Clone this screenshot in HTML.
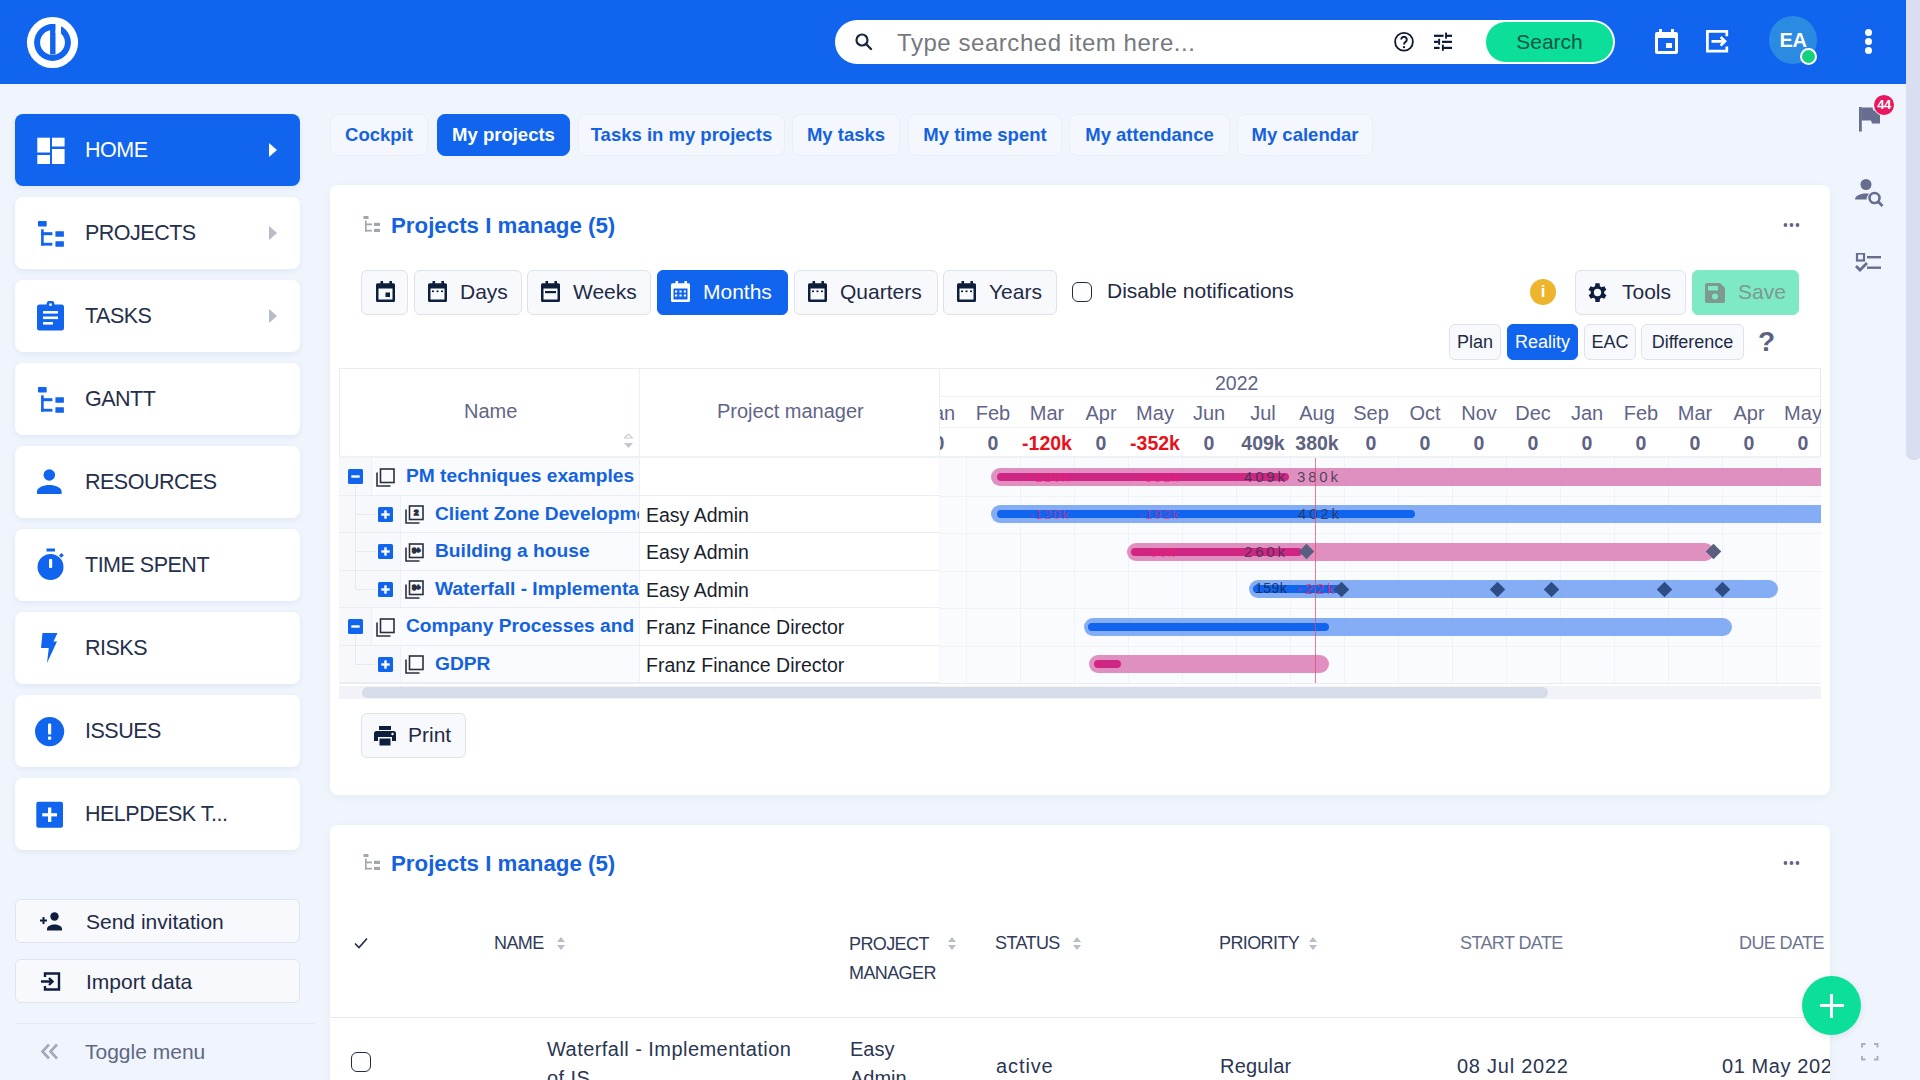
<!DOCTYPE html>
<html><head><meta charset="utf-8">
<style>
*{box-sizing:border-box;margin:0;padding:0}
html,body{width:1920px;height:1080px;overflow:hidden}
body{font-family:"Liberation Sans",sans-serif;background:#f0f5fd;position:relative;color:#1f2b45}
.abs{position:absolute}
#hdr{position:absolute;left:0;top:0;width:1906px;height:84px;background:#1064ee}
#vscroll{display:none}
#vthumb{position:absolute;left:1906px;top:0;width:16px;height:460px;border-radius:0 0 7px 7px;background:#d9def0}
.search{position:absolute;left:835px;top:20px;width:780px;height:44px;background:#fff;border-radius:22px}
.search .ph{position:absolute;left:62px;top:9px;font-size:24px;color:#76797f;letter-spacing:0.55px}
.sbtn{position:absolute;left:650px;top:1px;width:129px;height:42px;border-radius:21px;background:#0cdf99;color:#0d5443;font-size:21px;text-align:center;line-height:40px;border:1px solid #fff}
.nav{position:absolute;left:15px;width:285px;height:72px;background:#fff;border-radius:8px;box-shadow:0 2px 6px rgba(40,70,140,0.08)}
.nav .lbl{position:absolute;left:70px;top:23.5px;font-size:21.5px;letter-spacing:-0.5px;color:#25304b}
.nav .ico{position:absolute;left:22px;top:22px;width:28px;height:28px}
.nav .arr{position:absolute;left:254px;top:29px;width:0;height:0;border-top:7px solid transparent;border-bottom:7px solid transparent;border-left:8px solid #b7bbca}
.nav.act{background:#1064ee}
.nav.act .lbl{color:#fff}
.nav.act .arr{border-left-color:#fff}
.sbtnl{position:absolute;left:15px;width:285px;height:44px;border:1px solid #dfe4ee;border-radius:6px;background:#f7f9fd}
.sbtnl .lbl{position:absolute;left:70px;top:10px;font-size:21px;color:#1f2b45}
.tab{position:absolute;top:114px;height:42px;border-radius:8px;background:#f4f7fd;border:1px solid #eaeef6;color:#1462e0;font-weight:bold;font-size:18.5px;line-height:40px;text-align:center}
.tab.act{background:#1064ee;color:#fff;border-color:#1064ee}
.card{position:absolute;left:330px;width:1500px;background:#fff;border-radius:8px;box-shadow:0 2px 10px rgba(40,70,140,0.06)}
.ctitle{position:absolute;left:61px;font-size:22.3px;font-weight:bold;color:#1462e0}
.dots{position:absolute;left:1454px;width:16px;height:4px}
.btn{position:absolute;top:270px;height:45px;border:1px solid #dde2ec;border-radius:6px;background:#f7f9fd;font-size:21px;color:#1f2b45;line-height:41px}
.btn.act{background:#1064ee;color:#fff;border-color:#1064ee}
.btn2{position:absolute;top:324px;height:36px;border:1px solid #dde2ec;border-radius:6px;background:#f7f9fd;font-size:18px;color:#1f2b45;line-height:34px;text-align:center}
.btn2.act{background:#1064ee;color:#fff;border-color:#1064ee}
.th{position:absolute;font-size:18px;letter-spacing:-0.6px;color:#2f3b58}
.td{position:absolute;font-size:20px;color:#2a3653;white-space:nowrap}
.sort{position:absolute;width:9px;height:14px}
.sort:before{content:"";position:absolute;left:0;top:0;border-left:4.5px solid transparent;border-right:4.5px solid transparent;border-bottom:5.5px solid #b9bdc9}
.sort:after{content:"";position:absolute;left:0;top:8px;border-left:4.5px solid transparent;border-right:4.5px solid transparent;border-top:5.5px solid #b9bdc9}
.gh{position:absolute;font-size:20px;color:#5f6587;white-space:nowrap}
.gn{position:absolute;left:0;top:7px;font-size:19.2px;font-weight:bold;color:#1462e0;white-space:nowrap}
.gp{position:absolute;font-size:19.5px;color:#1a1f2e;white-space:nowrap}
.gy{position:absolute;font-size:19.5px;color:#5f6587}
.gm{position:absolute;font-size:20px;color:#5f6587;text-align:center}
.gv{position:absolute;font-size:19.5px;font-weight:bold;text-align:center}
.gl{position:absolute;font-size:15px;white-space:nowrap;letter-spacing:2.8px}
</style></head>
<body>
<div id="hdr">
  <svg class="abs" style="left:26px;top:16px" width="54" height="54" viewBox="0 0 54 54">
    <circle cx="26.5" cy="26.5" r="25.6" fill="#fff"/>
    <circle cx="26.5" cy="26.5" r="18.4" fill="#1064ee"/>
    <circle cx="26.5" cy="26.5" r="12.4" fill="#fff"/>
    <rect x="24.1" y="8" width="5.4" height="30.5" fill="#1064ee"/>
    <rect x="29.5" y="7.5" width="5.5" height="9.5" fill="#fff"/>
  </svg>
  <div class="search">
    <svg class="abs" style="left:19px;top:12px" width="20" height="20" viewBox="0 0 20 20"><circle cx="8" cy="8" r="5.5" fill="none" stroke="#1c2740" stroke-width="2.2"/><line x1="12" y1="12" x2="17" y2="17" stroke="#1c2740" stroke-width="2.4" stroke-linecap="round"/></svg>
    <div class="ph">Type searched item here...</div>
    <svg class="abs" style="left:557px;top:10px" width="24" height="24" viewBox="0 0 24 24"><circle cx="12" cy="11.75" r="8.9" fill="none" stroke="#0e1a35" stroke-width="1.8"/><path d="M9.2 9.6a2.8 2.8 0 1 1 4.3 2.3c-1 .7-1.5 1.2-1.5 2.5" fill="none" stroke="#0e1a35" stroke-width="1.9" stroke-linecap="butt"/><rect x="11" y="16.2" width="2" height="1.9" fill="#0e1a35"/></svg>
    <svg class="abs" style="left:597px;top:12px" width="22" height="22" viewBox="0 0 22 22" fill="#0e1a35"><rect x="2" y="2.7" width="9.6" height="2.2"/><rect x="14" y="2.7" width="6" height="2.2"/><rect x="13.1" y="0.6" width="1.9" height="6.1"/><rect x="2" y="8.75" width="4.5" height="2.2"/><rect x="10" y="8.75" width="10" height="2.2"/><rect x="6.2" y="6.8" width="1.9" height="6"/><rect x="2" y="14.8" width="5.6" height="2.2"/><rect x="11" y="14.8" width="9" height="2.2"/><rect x="9.9" y="12.6" width="1.9" height="6.2"/></svg>
    <div class="sbtn">Search</div>
  </div>
  <!-- calendar -->
  <svg class="abs" style="left:1655px;top:29px" width="23" height="25" viewBox="0 0 23 25" fill="#fff"><path d="M4 0h3v3h9V0h3v3h2a2 2 0 0 1 2 2v18a2 2 0 0 1-2 2H2a2 2 0 0 1-2-2V5a2 2 0 0 1 2-2h2zM3 9v13h17V9z"/><rect x="11" y="14" width="6" height="5"/></svg>
  <!-- export -->
  <svg class="abs" style="left:1706px;top:30px" width="23" height="23" viewBox="0 0 23 23" fill="none" stroke="#fff" stroke-width="2.7"><path d="M20.8 6.2V1.4H1.4v19.8h19.4v-4.8"/><path d="M5.5 11.3h13.5M14.6 7l4.4 4.3-4.4 4.3"/></svg>
  <div class="abs" style="left:1769px;top:16px;width:48px;height:48px;border-radius:24px;background:#2b8ae2;color:#fff;font-size:21px;text-align:center;line-height:49px;letter-spacing:-0.5px;font-weight:bold;font-size:20px">EA</div>
  <div class="abs" style="left:1800px;top:47.5px;width:17px;height:17px;border-radius:9px;background:#15d07d;border:2.3px solid #fff"></div>
  <div class="abs" style="left:1865px;top:28.6px;width:7.4px;height:7.4px;border-radius:4px;background:#fff"></div>
  <div class="abs" style="left:1865px;top:37.7px;width:7.4px;height:7.4px;border-radius:4px;background:#fff"></div>
  <div class="abs" style="left:1865px;top:46.9px;width:7.4px;height:7.4px;border-radius:4px;background:#fff"></div>
</div>
<div id="vscroll"></div><div id="vthumb"></div>

<!-- SIDEBAR -->
<div class="nav act" style="top:114px"><div class="lbl">HOME</div><div class="arr"></div>
<svg class="abs" style="left:22px;top:23px" width="28" height="27" viewBox="0 0 28 27" fill="#fff"><rect x="0.3" y="0.7" width="12.7" height="14.8"/><rect x="0.3" y="18" width="12.7" height="9"/><rect x="15" y="0.7" width="12.6" height="8.8"/><rect x="15" y="12" width="12.6" height="15"/></svg></div>
<div class="nav" style="top:197px"><div class="lbl">PROJECTS</div><div class="arr"></div>
<svg class="abs" style="left:23px;top:23px" width="27" height="27" viewBox="0 0 27 27" fill="#1064ee"><rect x="0" y="0.9" width="8.7" height="5.6" rx="0.8"/><rect x="3.1" y="9.3" width="2.6" height="16.3"/><rect x="3.1" y="12.2" width="11.3" height="3"/><rect x="3.1" y="22.8" width="11.3" height="2.8"/><rect x="17.4" y="11.3" width="8.5" height="5.4" rx="0.5"/><rect x="17.4" y="21.3" width="8.5" height="5.4" rx="0.5"/></svg></div>
<div class="nav" style="top:280px"><div class="lbl">TASKS</div><div class="arr"></div>
<svg class="abs" style="left:22px;top:21px" width="27" height="30" viewBox="0 0 27 30"><path d="M2.5 3.5h7a4 4 0 0 1 8 0h7a2.5 2.5 0 0 1 2.5 2.5v21a2.5 2.5 0 0 1-2.5 2.5h-22A2.5 2.5 0 0 1 0 27V6a2.5 2.5 0 0 1 2.5-2.5z" fill="#1064ee"/><circle cx="13.5" cy="3.7" r="1.4" fill="#fff"/><rect x="6" y="10" width="15" height="2.6" fill="#fff"/><rect x="6" y="15.5" width="15" height="2.6" fill="#fff"/><rect x="6" y="21" width="10" height="2.6" fill="#fff"/></svg></div>
<div class="nav" style="top:363px"><div class="lbl">GANTT</div>
<svg class="abs" style="left:23px;top:23px" width="27" height="27" viewBox="0 0 27 27" fill="#1064ee"><rect x="0" y="0.9" width="8.7" height="5.6" rx="0.8"/><rect x="3.1" y="9.3" width="2.6" height="16.3"/><rect x="3.1" y="12.2" width="11.3" height="3"/><rect x="3.1" y="22.8" width="11.3" height="2.8"/><rect x="17.4" y="11.3" width="8.5" height="5.4" rx="0.5"/><rect x="17.4" y="21.3" width="8.5" height="5.4" rx="0.5"/></svg></div>
<div class="nav" style="top:446px"><div class="lbl">RESOURCES</div>
<svg class="abs" style="left:22px;top:23px" width="26" height="26" viewBox="0 0 26 26" fill="#1064ee"><circle cx="12.3" cy="6" r="5.8"/><path d="M0 25v-2.5c0-4 6.5-6.5 12.3-6.5s12.3 2.5 12.3 6.5V25z"/></svg></div>
<div class="nav" style="top:529px"><div class="lbl">TIME SPENT</div>
<svg class="abs" style="left:22px;top:19px" width="28" height="33" viewBox="0 0 28 33" fill="#1064ee"><rect x="9.5" y="0.5" width="8.5" height="3"/><circle cx="13.5" cy="19" r="13"/><path d="M22 7.5l2.5-2.5 2.3 2.3-2.5 2.5z"/><rect x="12" y="11" width="3.2" height="9" rx="1" fill="#fff"/></svg></div>
<div class="nav" style="top:612px"><div class="lbl">RISKS</div>
<svg class="abs" style="left:26px;top:20px" width="17" height="32" viewBox="0 0 17 32" fill="#1064ee"><path d="M1.5 1h15l-4 8.5h3.5L6 31l1.8-15H0z"/></svg></div>
<div class="nav" style="top:695px"><div class="lbl">ISSUES</div>
<svg class="abs" style="left:20px;top:22px" width="30" height="30" viewBox="0 0 30 30"><circle cx="14.6" cy="14.6" r="14.6" fill="#1064ee"/><rect x="13" y="6.5" width="3.2" height="11" rx="1" fill="#fff"/><rect x="13" y="19.5" width="3.2" height="3.3" rx="0.8" fill="#fff"/></svg></div>
<div class="nav" style="top:778px"><div class="lbl">HELPDESK T...</div>
<svg class="abs" style="left:21px;top:23px" width="27" height="27" viewBox="0 0 27 27"><rect x="0.3" y="0.7" width="26.7" height="26" rx="2" fill="#1064ee"/><rect x="12" y="6.5" width="3.3" height="14.5" fill="#fff"/><rect x="6.3" y="12.2" width="14.7" height="3.2" fill="#fff"/></svg></div>
<div class="sbtnl" style="top:899px"><div class="lbl">Send invitation</div>
<svg class="abs" style="left:24px;top:12px" width="24" height="19" viewBox="0 0 24 19" fill="#0e1f3d"><rect x="0" y="7.5" width="7" height="2"/><rect x="2.5" y="5" width="2" height="7"/><circle cx="14.5" cy="4.5" r="4.2"/><path d="M7 18.5v-1.5c0-3 4-4.5 7.5-4.5s7.5 1.5 7.5 4.5v1.5z"/></svg></div>
<div class="sbtnl" style="top:959px"><div class="lbl">Import data</div>
<svg class="abs" style="left:25px;top:12px" width="20" height="19" viewBox="0 0 20 19" fill="none" stroke="#0e1f3d" stroke-width="2.4"><path d="M4 5V1.5h14v16H4V14"/><path d="M0 9.5h11M8 6l3.5 3.5L8 13"/></svg></div>
<div class="abs" style="left:15px;top:1023px;width:300px;height:1px;background:#e5e9f1"></div>
<svg class="abs" style="left:40px;top:1043px" width="19" height="17" viewBox="0 0 19 17" fill="none" stroke="#a4a9ba" stroke-width="2.6"><path d="M9 1.5L2.5 8.5 9 15.5M17 1.5l-6.5 7 6.5 7"/></svg>
<div class="abs" style="left:85px;top:1040px;font-size:21px;color:#5e6884">Toggle menu</div>

<!-- RIGHT RAIL -->
<svg class="abs" style="left:1859px;top:107px" width="22" height="25" viewBox="0 0 22 25" fill="#676d90"><rect x="0" y="0" width="2.8" height="24.5"/><path d="M2.5 0.5h11l1 3H21v13H13l-1-3H2.5z"/></svg>
<div class="abs" style="left:1873px;top:94px;width:22px;height:22px;border-radius:11px;background:#e8185e;border:1.5px solid #fff;color:#fff;font-size:13px;font-weight:bold;text-align:center;line-height:19px;letter-spacing:-0.5px">44</div>
<svg class="abs" style="left:1855px;top:179px" width="29" height="28" viewBox="0 0 29 28" fill="#676d90"><circle cx="11" cy="5.5" r="5.5"/><path d="M0 20.5c0-3.5 5-6 11-6 1 0 2 .1 3 .2-1.5 1.5-2.4 3.5-2.4 5.8z"/><circle cx="19.5" cy="19" r="5" fill="none" stroke="#676d90" stroke-width="2.6"/><path d="M23 22.5l4.5 4.5" stroke="#676d90" stroke-width="2.8"/></svg>
<svg class="abs" style="left:1855px;top:253px" width="27" height="20" viewBox="0 0 27 20" fill="#676d90"><rect x="2" y="0.5" width="7" height="7" fill="none" stroke="#676d90" stroke-width="2.2"/><rect x="12" y="3" width="14" height="2.4"/><rect x="12" y="13.5" width="14" height="2.4"/><path d="M0 14l2-2 3 3 6-6 2 2-8 8z"/></svg>
<svg class="abs" style="left:1861px;top:1043px" width="18" height="18" viewBox="0 0 18 18" fill="none" stroke="#a9aec2" stroke-width="1.9"><path d="M1 4.5V1h3.5M13 1h3.5v3.5M16.5 13v3.5H13M4.5 16.5H1V13"/></svg>

<!-- TABS -->
<div class="tab" style="left:330px;width:98px">Cockpit</div>
<div class="tab act" style="left:437px;width:133px">My projects</div>
<div class="tab" style="left:578px;width:207px">Tasks in my projects</div>
<div class="tab" style="left:792px;width:108px">My tasks</div>
<div class="tab" style="left:908px;width:154px">My time spent</div>
<div class="tab" style="left:1069px;width:161px">My attendance</div>
<div class="tab" style="left:1237px;width:136px">My calendar</div>

<!-- CARD 1 -->
<div class="card" style="top:185px;height:610px"></div>
<svg class="abs" style="left:363px;top:216px" width="18" height="17" viewBox="0 0 18 17" fill="#a3a5ad"><rect x="0.5" y="0" width="5" height="3"/><rect x="2" y="4.5" width="1.6" height="11"/><rect x="2" y="7.5" width="7" height="1.8"/><rect x="2" y="13.8" width="7" height="1.7"/><rect x="11" y="6.8" width="6" height="3.2"/><rect x="11" y="12.8" width="6" height="3.2"/></svg>
<div class="ctitle" style="left:391px;top:212.5px">Projects I manage (5)</div>
<svg class="abs" style="left:1783px;top:222px" width="17" height="6" viewBox="0 0 17 6" fill="#5e6587"><circle cx="2.5" cy="3" r="1.9"/><circle cx="8.5" cy="3" r="1.9"/><circle cx="14.5" cy="3" r="1.9"/></svg>

<div class="btn" style="left:361px;width:47px"><svg class="abs" style="left:14px;top:10px" width="19" height="21" viewBox="0 0 19 21" fill="#0e1f3d"><path d="M4.5 0h2.6v2.3h6.3V0H16v2.3h1.5A1.5 1.5 0 0 1 19 3.8v15.7a1.5 1.5 0 0 1-1.5 1.5H1.5A1.5 1.5 0 0 1 0 19.5V3.8a1.5 1.5 0 0 1 1.5-1.5h3zM2.5 7.5v11h14v-11z"/><rect x="9.5" y="11.5" width="4.5" height="4.5"/></svg></div>
<div class="btn" style="left:414px;width:108px"><svg class="abs" style="left:13px;top:10px" width="19" height="21" viewBox="0 0 19 21" fill="#0e1f3d"><path d="M4.5 0h2.6v2.3h6.3V0H16v2.3h1.5A1.5 1.5 0 0 1 19 3.8v15.7a1.5 1.5 0 0 1-1.5 1.5H1.5A1.5 1.5 0 0 1 0 19.5V3.8a1.5 1.5 0 0 1 1.5-1.5h3zM2.5 7.5v11h14v-11z"/><rect x="4" y="9.5" width="2" height="1.6"/><rect x="8.5" y="9.5" width="2" height="1.6"/><rect x="13" y="9.5" width="2" height="1.6"/></svg><span class="abs" style="left:45px;top:0">Days</span></div>
<div class="btn" style="left:527px;width:124px"><svg class="abs" style="left:13px;top:10px" width="19" height="21" viewBox="0 0 19 21" fill="#0e1f3d"><path d="M4.5 0h2.6v2.3h6.3V0H16v2.3h1.5A1.5 1.5 0 0 1 19 3.8v15.7a1.5 1.5 0 0 1-1.5 1.5H1.5A1.5 1.5 0 0 1 0 19.5V3.8a1.5 1.5 0 0 1 1.5-1.5h3zM2.5 7.5v11h14v-11z"/><rect x="4" y="10" width="11" height="2.2"/></svg><span class="abs" style="left:45px;top:0">Weeks</span></div>
<div class="btn act" style="left:657px;width:131px"><svg class="abs" style="left:13px;top:10px" width="19" height="21" viewBox="0 0 19 21" fill="#fff"><path d="M4.5 0h2.6v2.3h6.3V0H16v2.3h1.5A1.5 1.5 0 0 1 19 3.8v15.7a1.5 1.5 0 0 1-1.5 1.5H1.5A1.5 1.5 0 0 1 0 19.5V3.8a1.5 1.5 0 0 1 1.5-1.5h3zM2.5 7.5v11h14v-11z"/><rect x="4" y="9.5" width="2.2" height="2"/><rect x="8.4" y="9.5" width="2.2" height="2"/><rect x="12.8" y="9.5" width="2.2" height="2"/><rect x="4" y="13.5" width="2.2" height="2"/><rect x="8.4" y="13.5" width="2.2" height="2"/><rect x="12.8" y="13.5" width="2.2" height="2"/></svg><span class="abs" style="left:45px;top:0">Months</span></div>
<div class="btn" style="left:794px;width:144px"><svg class="abs" style="left:13px;top:10px" width="19" height="21" viewBox="0 0 19 21" fill="#0e1f3d"><path d="M4.5 0h2.6v2.3h6.3V0H16v2.3h1.5A1.5 1.5 0 0 1 19 3.8v15.7a1.5 1.5 0 0 1-1.5 1.5H1.5A1.5 1.5 0 0 1 0 19.5V3.8a1.5 1.5 0 0 1 1.5-1.5h3zM2.5 7.5v11h14v-11z"/><rect x="4" y="9.5" width="2" height="1.6"/><rect x="8.5" y="9.5" width="2" height="1.6"/><rect x="13" y="9.5" width="2" height="1.6"/></svg><span class="abs" style="left:45px;top:0">Quarters</span></div>
<div class="btn" style="left:943px;width:114px"><svg class="abs" style="left:13px;top:10px" width="19" height="21" viewBox="0 0 19 21" fill="#0e1f3d"><path d="M4.5 0h2.6v2.3h6.3V0H16v2.3h1.5A1.5 1.5 0 0 1 19 3.8v15.7a1.5 1.5 0 0 1-1.5 1.5H1.5A1.5 1.5 0 0 1 0 19.5V3.8a1.5 1.5 0 0 1 1.5-1.5h3zM2.5 7.5v11h14v-11z"/><rect x="4" y="9.5" width="2" height="1.6"/><rect x="8.5" y="9.5" width="2" height="1.6"/><rect x="13" y="9.5" width="2" height="1.6"/></svg><span class="abs" style="left:45px;top:0">Years</span></div>
<div class="abs" style="left:1072px;top:282px;width:20px;height:20px;border:1.8px solid #1f2b45;border-radius:6px;background:#fff"></div>
<div class="abs" style="left:1107px;top:279px;font-size:21px;color:#1f2b45">Disable notifications</div>
<div class="abs" style="left:1530px;top:279px;width:26px;height:26px;border-radius:13px;background:#ecb52c;color:#fff;font-weight:bold;font-size:17px;text-align:center;line-height:26px">i</div>
<div class="btn" style="left:1575px;width:111px"><svg class="abs" style="left:9px;top:9px" width="25" height="25" viewBox="0 0 24 24" fill="#0e1f3d"><path d="M19.4 13a7.5 7.5 0 0 0 0-2l2.1-1.6-2-3.5-2.5 1a7.6 7.6 0 0 0-1.7-1L15 3h-4l-.4 2.9a7.6 7.6 0 0 0-1.7 1l-2.5-1-2 3.5L6.6 11a7.5 7.5 0 0 0 0 2l-2.1 1.6 2 3.5 2.5-1a7.6 7.6 0 0 0 1.7 1L11 21h4l.4-2.9a7.6 7.6 0 0 0 1.7-1l2.5 1 2-3.5zM13 15.5a3.5 3.5 0 1 1 0-7 3.5 3.5 0 0 1 0 7z" transform="translate(-1 0)"/></svg><span class="abs" style="left:46px;top:0">Tools</span></div>
<div class="btn" style="left:1692px;width:107px;background:#7de9c5;border-color:#7de9c5;color:#7c9a92"><svg class="abs" style="left:12px;top:12px" width="20" height="20" viewBox="0 0 20 20" fill="#7f9891"><path d="M0 2a2 2 0 0 1 2-2h13l5 5v13a2 2 0 0 1-2 2H2a2 2 0 0 1-2-2z"/><rect x="3" y="3" width="10" height="4.5" fill="#7de9c5"/><circle cx="10" cy="13.5" r="3" fill="#7de9c5"/></svg><span class="abs" style="left:45px;top:0">Save</span></div>

<div class="btn2" style="left:1449px;width:52px">Plan</div>
<div class="btn2 act" style="left:1507px;width:71px">Reality</div>
<div class="btn2" style="left:1584px;width:52px">EAC</div>
<div class="btn2" style="left:1641px;width:103px">Difference</div>
<div class="abs" style="left:1758px;top:326px;font-size:28px;font-weight:bold;color:#5b6182">?</div>

<div id="gantt" class="abs" style="left:339px;top:368px;width:1482px;height:332px"><div class="abs" style="left:0;top:0;width:1482px;height:88px;background:#fff"></div>
<div class="abs" style="left:0;top:0;width:1482px;height:316px;border:1px solid #e9ecf2;border-right:1px solid #e4e8ef"></div>
<div class="abs" style="left:300px;top:0;width:1px;height:316px;background:#eceff4"></div>
<div class="abs" style="left:600px;top:0;width:1px;height:316px;background:#eceff4"></div>
<div class="abs" style="left:600px;top:28px;width:882px;height:1px;background:#f0f2f6"></div>
<div class="abs" style="left:600px;top:59px;width:882px;height:1px;background:#f0f2f6"></div>
<div class="abs" style="left:0;top:88px;width:1482px;height:2px;background:#eef1f6"></div>
<div class="gh" style="left:125px;top:32px">Name</div>
<div class="gh" style="left:378px;top:32px">Project manager</div>
<svg class="abs" style="left:285px;top:65px" width="9" height="16" viewBox="0 0 9 16" fill="#c2c5cf"><path d="M0.5 5L4.5 1l4 4z" fill="none" stroke="#c9ccd5" stroke-width="1.2"/><path d="M0 10h9l-4.5 5z"/></svg>
<div class="abs" style="left:0;top:90px;width:1482px;height:37.5px;background:#f6f8fc;border-bottom:1px solid #eaedf3"></div>
<div class="abs" style="left:0;top:127.5px;width:1482px;height:37.5px;background:#f6f8fc;border-bottom:1px solid #eaedf3"></div>
<div class="abs" style="left:0;top:165px;width:1482px;height:37.5px;background:#f6f8fc;border-bottom:1px solid #eaedf3"></div>
<div class="abs" style="left:0;top:202.5px;width:1482px;height:37.5px;background:#f6f8fc;border-bottom:1px solid #eaedf3"></div>
<div class="abs" style="left:0;top:240px;width:1482px;height:37.5px;background:#f6f8fc;border-bottom:1px solid #eaedf3"></div>
<div class="abs" style="left:0;top:277.5px;width:1482px;height:37.5px;background:#f6f8fc;border-bottom:1px solid #eaedf3"></div>
<div class="abs" style="left:32px;top:90px;width:568px;height:37.5px;background:#fafbfe;border-bottom:1px solid #eaedf3;border-left:1px solid #eef0f5"></div>
<div class="abs" style="left:300px;top:90px;width:300px;height:37.5px;background:#fff;border-bottom:1px solid #eaedf3;border-left:1px solid #eceff4"></div>
<div class="abs" style="left:61px;top:127.5px;width:539px;height:37.5px;background:#fafbfe;border-bottom:1px solid #eaedf3;border-left:1px solid #eef0f5"></div>
<div class="abs" style="left:300px;top:127.5px;width:300px;height:37.5px;background:#fff;border-bottom:1px solid #eaedf3;border-left:1px solid #eceff4"></div>
<div class="abs" style="left:61px;top:165px;width:539px;height:37.5px;background:#fafbfe;border-bottom:1px solid #eaedf3;border-left:1px solid #eef0f5"></div>
<div class="abs" style="left:300px;top:165px;width:300px;height:37.5px;background:#fff;border-bottom:1px solid #eaedf3;border-left:1px solid #eceff4"></div>
<div class="abs" style="left:61px;top:202.5px;width:539px;height:37.5px;background:#fafbfe;border-bottom:1px solid #eaedf3;border-left:1px solid #eef0f5"></div>
<div class="abs" style="left:300px;top:202.5px;width:300px;height:37.5px;background:#fff;border-bottom:1px solid #eaedf3;border-left:1px solid #eceff4"></div>
<div class="abs" style="left:32px;top:240px;width:568px;height:37.5px;background:#fafbfe;border-bottom:1px solid #eaedf3;border-left:1px solid #eef0f5"></div>
<div class="abs" style="left:300px;top:240px;width:300px;height:37.5px;background:#fff;border-bottom:1px solid #eaedf3;border-left:1px solid #eceff4"></div>
<div class="abs" style="left:61px;top:277.5px;width:539px;height:37.5px;background:#fafbfe;border-bottom:1px solid #eaedf3;border-left:1px solid #eef0f5"></div>
<div class="abs" style="left:300px;top:277.5px;width:300px;height:37.5px;background:#fff;border-bottom:1px solid #eaedf3;border-left:1px solid #eceff4"></div>
<div class="abs" style="left:601px;top:90px;width:881px;height:225px;background:#f9fbfe"></div>
<div class="abs" style="left:601px;top:127.5px;width:881px;height:1px;background:#f0f2f7"></div>
<div class="abs" style="left:601px;top:165px;width:881px;height:1px;background:#f0f2f7"></div>
<div class="abs" style="left:601px;top:202.5px;width:881px;height:1px;background:#f0f2f7"></div>
<div class="abs" style="left:601px;top:240px;width:881px;height:1px;background:#f0f2f7"></div>
<div class="abs" style="left:601px;top:277.5px;width:881px;height:1px;background:#f0f2f7"></div>
<div class="abs" style="left:627px;top:90px;width:1px;height:225px;background:#f0f2f7"></div>
<div class="abs" style="left:681px;top:90px;width:1px;height:225px;background:#f0f2f7"></div>
<div class="abs" style="left:735px;top:90px;width:1px;height:225px;background:#f0f2f7"></div>
<div class="abs" style="left:789px;top:90px;width:1px;height:225px;background:#f0f2f7"></div>
<div class="abs" style="left:843px;top:90px;width:1px;height:225px;background:#f0f2f7"></div>
<div class="abs" style="left:897px;top:90px;width:1px;height:225px;background:#f0f2f7"></div>
<div class="abs" style="left:951px;top:90px;width:1px;height:225px;background:#f0f2f7"></div>
<div class="abs" style="left:1005px;top:90px;width:1px;height:225px;background:#f0f2f7"></div>
<div class="abs" style="left:1059px;top:90px;width:1px;height:225px;background:#f0f2f7"></div>
<div class="abs" style="left:1113px;top:90px;width:1px;height:225px;background:#f0f2f7"></div>
<div class="abs" style="left:1167px;top:90px;width:1px;height:225px;background:#f0f2f7"></div>
<div class="abs" style="left:1221px;top:90px;width:1px;height:225px;background:#f0f2f7"></div>
<div class="abs" style="left:1275px;top:90px;width:1px;height:225px;background:#f0f2f7"></div>
<div class="abs" style="left:1329px;top:90px;width:1px;height:225px;background:#f0f2f7"></div>
<div class="abs" style="left:1383px;top:90px;width:1px;height:225px;background:#f0f2f7"></div>
<div class="abs" style="left:1437px;top:90px;width:1px;height:225px;background:#f0f2f7"></div>
<div class="abs" style="left:16px;top:118px;width:1px;height:103px;background:#e6e9f0"></div>
<div class="abs" style="left:16px;top:146px;width:20px;height:1px;background:#e6e9f0"></div>
<div class="abs" style="left:16px;top:183px;width:20px;height:1px;background:#e6e9f0"></div>
<div class="abs" style="left:16px;top:221px;width:20px;height:1px;background:#e6e9f0"></div>
<div class="abs" style="left:16px;top:266px;width:1px;height:30px;background:#e6e9f0"></div>
<div class="abs" style="left:16px;top:296px;width:20px;height:1px;background:#e6e9f0"></div>
<svg class="abs" style="left:9px;top:101.25px" width="15" height="15" viewBox="0 0 15 15"><rect width="15" height="15" rx="1.5" fill="#1064ee"/><rect x="3.3" y="6.3" width="8.4" height="2.4" fill="#fff"/></svg>
<svg class="abs" style="left:37px;top:99.75px" width="19" height="19" viewBox="0 0 19 19" fill="none" stroke="#2a3040" stroke-width="1.6"><path d="M1 4.5V18h13.5"/><rect x="4.5" y="1" width="13.5" height="13.5"/></svg>
<div class="abs" style="left:67px;top:90px;width:233px;height:37px;overflow:hidden"><div class="gn">PM techniques examples</div></div>
<svg class="abs" style="left:39px;top:138.75px" width="15" height="15" viewBox="0 0 15 15"><rect width="15" height="15" rx="1.5" fill="#1064ee"/><rect x="3.3" y="6.3" width="8.4" height="2.4" fill="#fff"/><rect x="6.3" y="3.3" width="2.4" height="8.4" fill="#fff"/></svg>
<svg class="abs" style="left:66px;top:137.25px" width="19" height="19" viewBox="0 0 19 19" fill="none" stroke="#2a3040" stroke-width="1.6"><path d="M1 4.5V18h13.5"/><rect x="4.5" y="1" width="13.5" height="13.5"/><text x="11.3" y="10.3" font-size="8" font-family="Liberation Sans" text-anchor="middle" fill="#2a3040">2</text></svg>
<div class="abs" style="left:96px;top:127.5px;width:204px;height:37px;overflow:hidden"><div class="gn">Client Zone Development</div></div>
<div class="gp" style="left:307px;top:135.5px">Easy Admin</div>
<svg class="abs" style="left:39px;top:176.25px" width="15" height="15" viewBox="0 0 15 15"><rect width="15" height="15" rx="1.5" fill="#1064ee"/><rect x="3.3" y="6.3" width="8.4" height="2.4" fill="#fff"/><rect x="6.3" y="3.3" width="2.4" height="8.4" fill="#fff"/></svg>
<svg class="abs" style="left:66px;top:174.75px" width="19" height="19" viewBox="0 0 19 19" fill="none" stroke="#2a3040" stroke-width="1.6"><path d="M1 4.5V18h13.5"/><rect x="4.5" y="1" width="13.5" height="13.5"/><text x="11.3" y="10.3" font-size="7" font-weight="bold" font-family="Liberation Sans" text-anchor="middle" fill="#2a3040">9+</text></svg>
<div class="abs" style="left:96px;top:165px;width:204px;height:37px;overflow:hidden"><div class="gn">Building a house</div></div>
<div class="gp" style="left:307px;top:173.0px">Easy Admin</div>
<svg class="abs" style="left:39px;top:213.75px" width="15" height="15" viewBox="0 0 15 15"><rect width="15" height="15" rx="1.5" fill="#1064ee"/><rect x="3.3" y="6.3" width="8.4" height="2.4" fill="#fff"/><rect x="6.3" y="3.3" width="2.4" height="8.4" fill="#fff"/></svg>
<svg class="abs" style="left:66px;top:212.25px" width="19" height="19" viewBox="0 0 19 19" fill="none" stroke="#2a3040" stroke-width="1.6"><path d="M1 4.5V18h13.5"/><rect x="4.5" y="1" width="13.5" height="13.5"/><text x="11.3" y="10.3" font-size="7" font-weight="bold" font-family="Liberation Sans" text-anchor="middle" fill="#2a3040">9+</text></svg>
<div class="abs" style="left:96px;top:202.5px;width:204px;height:37px;overflow:hidden"><div class="gn">Waterfall - Implementation of IS</div></div>
<div class="gp" style="left:307px;top:210.5px">Easy Admin</div>
<svg class="abs" style="left:9px;top:251.25px" width="15" height="15" viewBox="0 0 15 15"><rect width="15" height="15" rx="1.5" fill="#1064ee"/><rect x="3.3" y="6.3" width="8.4" height="2.4" fill="#fff"/></svg>
<svg class="abs" style="left:37px;top:249.75px" width="19" height="19" viewBox="0 0 19 19" fill="none" stroke="#2a3040" stroke-width="1.6"><path d="M1 4.5V18h13.5"/><rect x="4.5" y="1" width="13.5" height="13.5"/></svg>
<div class="abs" style="left:67px;top:240px;width:233px;height:37px;overflow:hidden"><div class="gn">Company Processes and Workflows</div></div>
<div class="gp" style="left:307px;top:248.0px">Franz Finance Director</div>
<svg class="abs" style="left:39px;top:288.75px" width="15" height="15" viewBox="0 0 15 15"><rect width="15" height="15" rx="1.5" fill="#1064ee"/><rect x="3.3" y="6.3" width="8.4" height="2.4" fill="#fff"/><rect x="6.3" y="3.3" width="2.4" height="8.4" fill="#fff"/></svg>
<svg class="abs" style="left:66px;top:287.25px" width="19" height="19" viewBox="0 0 19 19" fill="none" stroke="#2a3040" stroke-width="1.6"><path d="M1 4.5V18h13.5"/><rect x="4.5" y="1" width="13.5" height="13.5"/></svg>
<div class="abs" style="left:96px;top:277.5px;width:204px;height:37px;overflow:hidden"><div class="gn">GDPR</div></div>
<div class="gp" style="left:307px;top:285.5px">Franz Finance Director</div>
<div class="abs" style="left:601px;top:0;width:881px;height:88px;overflow:hidden">
<div class="gy" style="left:275px;top:4px">2022</div>
<div class="gm" style="left:-28px;top:34px;width:54px">Jan</div>
<div class="gv" style="left:-41px;top:64px;width:80px;color:#5d6282">0</div>
<div class="gm" style="left:26px;top:34px;width:54px">Feb</div>
<div class="gv" style="left:13px;top:64px;width:80px;color:#5d6282">0</div>
<div class="gm" style="left:80px;top:34px;width:54px">Mar</div>
<div class="gv" style="left:67px;top:64px;width:80px;color:#e8101a">-120k</div>
<div class="gm" style="left:134px;top:34px;width:54px">Apr</div>
<div class="gv" style="left:121px;top:64px;width:80px;color:#5d6282">0</div>
<div class="gm" style="left:188px;top:34px;width:54px">May</div>
<div class="gv" style="left:175px;top:64px;width:80px;color:#e8101a">-352k</div>
<div class="gm" style="left:242px;top:34px;width:54px">Jun</div>
<div class="gv" style="left:229px;top:64px;width:80px;color:#5d6282">0</div>
<div class="gm" style="left:296px;top:34px;width:54px">Jul</div>
<div class="gv" style="left:283px;top:64px;width:80px;color:#5d6282">409k</div>
<div class="gm" style="left:350px;top:34px;width:54px">Aug</div>
<div class="gv" style="left:337px;top:64px;width:80px;color:#5d6282">380k</div>
<div class="gm" style="left:404px;top:34px;width:54px">Sep</div>
<div class="gv" style="left:391px;top:64px;width:80px;color:#5d6282">0</div>
<div class="gm" style="left:458px;top:34px;width:54px">Oct</div>
<div class="gv" style="left:445px;top:64px;width:80px;color:#5d6282">0</div>
<div class="gm" style="left:512px;top:34px;width:54px">Nov</div>
<div class="gv" style="left:499px;top:64px;width:80px;color:#5d6282">0</div>
<div class="gm" style="left:566px;top:34px;width:54px">Dec</div>
<div class="gv" style="left:553px;top:64px;width:80px;color:#5d6282">0</div>
<div class="gm" style="left:620px;top:34px;width:54px">Jan</div>
<div class="gv" style="left:607px;top:64px;width:80px;color:#5d6282">0</div>
<div class="gm" style="left:674px;top:34px;width:54px">Feb</div>
<div class="gv" style="left:661px;top:64px;width:80px;color:#5d6282">0</div>
<div class="gm" style="left:728px;top:34px;width:54px">Mar</div>
<div class="gv" style="left:715px;top:64px;width:80px;color:#5d6282">0</div>
<div class="gm" style="left:782px;top:34px;width:54px">Apr</div>
<div class="gv" style="left:769px;top:64px;width:80px;color:#5d6282">0</div>
<div class="gm" style="left:836px;top:34px;width:54px">May</div>
<div class="gv" style="left:823px;top:64px;width:80px;color:#5d6282">0</div>
</div>
<div class="abs" style="left:652px;top:100.0px;width:830px;height:18px;background:#e090c0;border-radius:9.0px 0 0 9.0px"></div>
<div class="abs" style="left:658px;top:105.0px;width:292px;height:8px;background:#cf2683;border-radius:4.0px"></div>
<div class="gl" style="left:690px;top:102.0px;color:rgba(245,25,110,0.6);font-size:13px;letter-spacing:1.8px">-120k</div>
<div class="gl" style="left:800px;top:102.0px;color:rgba(245,25,110,0.6);font-size:13px;letter-spacing:1.8px">-352k</div>
<div class="gl" style="left:905px;top:100px;color:rgba(50,52,75,0.85)">409k</div>
<div class="gl" style="left:958px;top:100px;color:rgba(50,52,75,0.85)">380k</div>
<div class="abs" style="left:652px;top:137.0px;width:830px;height:18px;background:#84adf5;border-radius:9.0px 0 0 9.0px"></div>
<div class="abs" style="left:658px;top:142.0px;width:418px;height:8px;background:#1064ee;border-radius:4.0px"></div>
<div class="gl" style="left:690px;top:139.0px;color:rgba(245,25,110,0.6);font-size:13px;letter-spacing:1.8px">-120k</div>
<div class="gl" style="left:800px;top:139.0px;color:rgba(245,25,110,0.6);font-size:13px;letter-spacing:1.8px">-192k</div>
<div class="gl" style="left:959px;top:137px;color:rgba(50,52,75,0.85)">402k</div>
<div class="abs" style="left:788px;top:174.5px;width:587px;height:18px;background:#e090c0;border-radius:9.0px"></div>
<div class="abs" style="left:792px;top:179.5px;width:171px;height:8px;background:#cf2683;border-radius:4.0px"></div>
<div class="gl" style="left:805px;top:176.5px;color:rgba(245,25,110,0.6);font-size:13px;letter-spacing:1.8px">-90k</div>
<div class="gl" style="left:905px;top:174.5px;color:rgba(50,52,75,0.85)">260k</div>
<div class="abs" style="left:961.5px;top:178.0px;width:11px;height:11px;background:#5a5f80;transform:rotate(45deg)"></div>
<div class="abs" style="left:1368.5px;top:178.0px;width:11px;height:11px;background:#5a5f80;transform:rotate(45deg)"></div>
<div class="abs" style="left:910px;top:212.0px;width:529px;height:18px;background:#84adf5;border-radius:9.0px"></div>
<div class="abs" style="left:914px;top:217.0px;width:89px;height:8px;background:#1064ee;border-radius:4.0px"></div>
<div class="gl" style="left:916px;top:212px;color:rgba(20,30,70,0.8);letter-spacing:0.5px;font-size:14px">159k</div>
<div class="gl" style="left:958px;top:212px;color:rgba(240,40,90,0.75)">-22k</div>
<div class="abs" style="left:996.5px;top:215.5px;width:11px;height:11px;background:#2f4d85;transform:rotate(45deg)"></div>
<div class="abs" style="left:1152.5px;top:215.5px;width:11px;height:11px;background:#2f4d85;transform:rotate(45deg)"></div>
<div class="abs" style="left:1206.5px;top:215.5px;width:11px;height:11px;background:#2f4d85;transform:rotate(45deg)"></div>
<div class="abs" style="left:1319.5px;top:215.5px;width:11px;height:11px;background:#2f4d85;transform:rotate(45deg)"></div>
<div class="abs" style="left:1377.5px;top:215.5px;width:11px;height:11px;background:#2f4d85;transform:rotate(45deg)"></div>
<div class="abs" style="left:745px;top:250.0px;width:648px;height:18px;background:#84adf5;border-radius:9.0px"></div>
<div class="abs" style="left:749px;top:255.0px;width:241px;height:8px;background:#1064ee;border-radius:4.0px"></div>
<div class="abs" style="left:750px;top:287.0px;width:240px;height:18px;background:#e090c0;border-radius:9.0px"></div>
<div class="abs" style="left:755px;top:292.0px;width:27px;height:8px;background:#cf2683;border-radius:4.0px"></div>
<div class="abs" style="left:976px;top:90px;width:1.3px;height:225px;background:rgba(228,70,90,0.7)"></div>
<div class="abs" style="left:0;top:318px;width:1482px;height:13px;background:#f1f3f8"></div>
<div class="abs" style="left:23px;top:319px;width:1186px;height:11px;border-radius:6px;background:#d6dcea"></div></div>

<div class="btn" style="left:361px;top:713px;width:105px;height:45px"><svg class="abs" style="left:12px;top:12px" width="22" height="20" viewBox="0 0 22 20" fill="#0e1f3d"><rect x="5" y="0" width="12" height="4"/><path d="M2.5 5h17A2.5 2.5 0 0 1 22 7.5V15h-4v-4H4v4H0V7.5A2.5 2.5 0 0 1 2.5 5z"/><rect x="5.5" y="12.5" width="11" height="7"/><circle cx="18.5" cy="8" r="1.2" fill="#fff"/></svg><span class="abs" style="left:46px;top:0">Print</span></div>
<!-- CARD 2 -->
<div class="card" style="top:825px;height:300px"></div>
<svg class="abs" style="left:363px;top:854px" width="18" height="17" viewBox="0 0 18 17" fill="#a3a5ad"><rect x="0.5" y="0" width="5" height="3"/><rect x="2" y="4.5" width="1.6" height="11"/><rect x="2" y="7.5" width="7" height="1.8"/><rect x="2" y="13.8" width="7" height="1.7"/><rect x="11" y="6.8" width="6" height="3.2"/><rect x="11" y="12.8" width="6" height="3.2"/></svg>
<div class="ctitle" style="left:391px;top:850.5px">Projects I manage (5)</div>
<svg class="abs" style="left:1783px;top:860px" width="17" height="6" viewBox="0 0 17 6" fill="#5e6587"><circle cx="2.5" cy="3" r="1.9"/><circle cx="8.5" cy="3" r="1.9"/><circle cx="14.5" cy="3" r="1.9"/></svg>
<svg class="abs" style="left:354px;top:937px" width="14" height="12" viewBox="0 0 14 12" fill="none" stroke="#1f2b45" stroke-width="1.6"><path d="M1 6.5l4 4L13 1.5"/></svg>
<div class="th" style="left:494px;top:933px">NAME</div>
<div class="th" style="left:849px;top:929.5px;line-height:29px">PROJECT<br>MANAGER</div>
<div class="th" style="left:995px;top:933px">STATUS</div>
<div class="th" style="left:1219px;top:933px">PRIORITY</div>
<div class="th" style="left:1460px;top:933px;color:#6e7592">START DATE</div>
<div class="th" style="left:1739px;top:933px;color:#6e7592">DUE DATE</div>
<div class="sort" style="left:557px;top:936.5px"></div>
<div class="sort" style="left:948px;top:936.5px"></div>
<div class="sort" style="left:1073px;top:936.5px"></div>
<div class="sort" style="left:1309px;top:936.5px"></div>
<div class="abs" style="left:330px;top:1017px;width:1500px;height:1px;background:#e6e9ef"></div>
<div class="abs" style="left:351px;top:1052px;width:20px;height:20px;border:1.8px solid #1f2b45;border-radius:6px;background:#fff"></div>
<div class="td" style="left:547px;top:1035px;line-height:29px;letter-spacing:0.45px">Waterfall - Implementation<br>of IS</div>
<div class="td" style="left:850px;top:1035px;line-height:29px">Easy<br>Admin</div>
<div class="td" style="left:996px;top:1055px;letter-spacing:0.9px">active</div>
<div class="td" style="left:1220px;top:1055px;letter-spacing:0.2px">Regular</div>
<div class="td" style="left:1457px;top:1055px;letter-spacing:0.75px">08 Jul 2022</div>
<div class="abs" style="left:1700px;top:1040px;width:130px;height:40px;overflow:hidden"><div class="td" style="left:22px;top:15px;letter-spacing:0.6px">01 May 2022</div></div>
<div class="abs" style="left:1802px;top:976px;width:59px;height:59px;border-radius:30px;background:#0cdf9a;box-shadow:0 2px 8px rgba(0,0,0,0.08)"><div class="abs" style="left:17.5px;top:28px;width:24px;height:3px;background:#fff"></div><div class="abs" style="left:28px;top:17.5px;width:3px;height:24px;background:#fff"></div></div>
</body></html>
